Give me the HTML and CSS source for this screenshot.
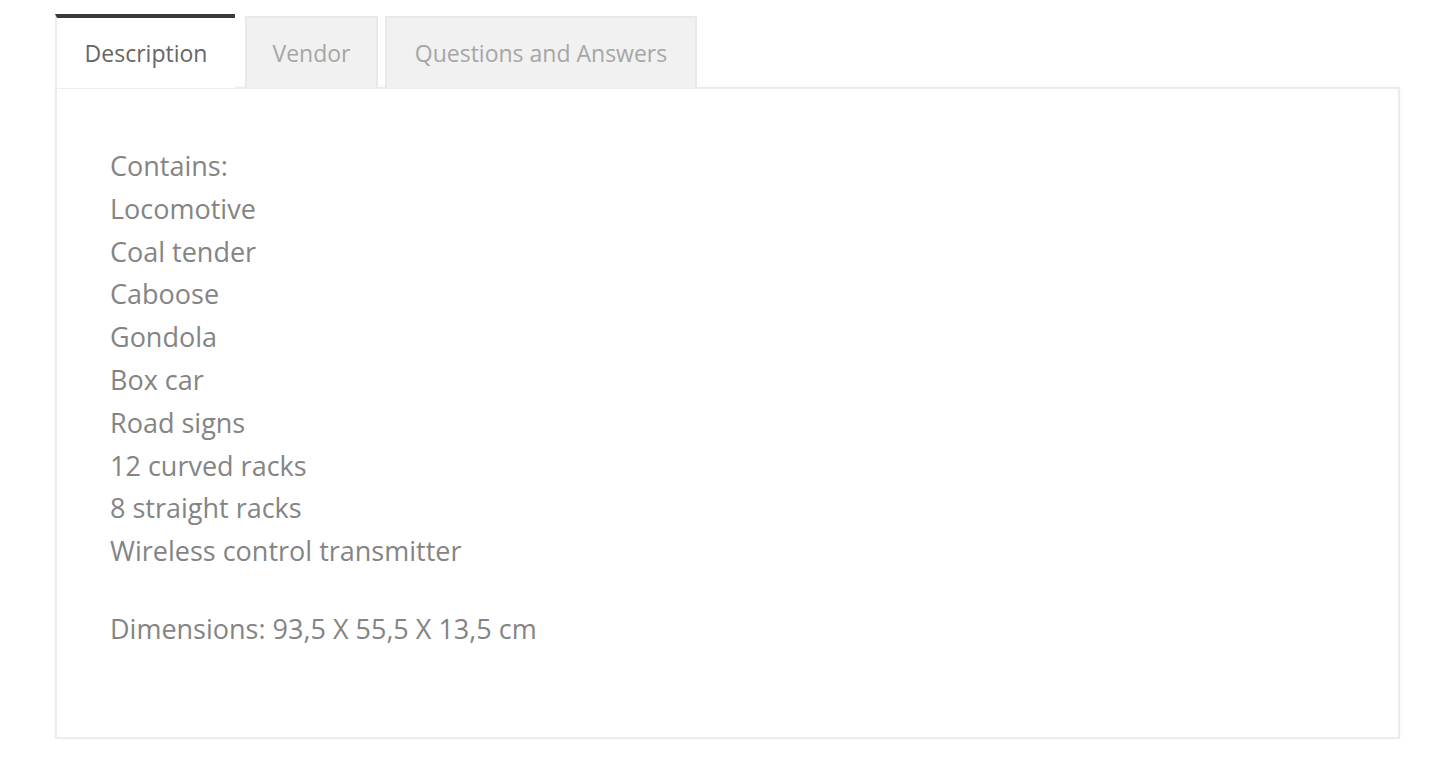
FILE: index.html
```html
<!DOCTYPE html>
<html lang="en">
<head>
<meta charset="utf-8">
<title>Product tabs</title>
<link rel="stylesheet" href="styles.css">
</head>
<body>
<div class="tabs-wrap">
  <ul class="tabs">
    <li class="tab tab-active">Description</li>
    <li class="tab tab-vendor">Vendor</li>
    <li class="tab tab-qa">Questions and Answers</li>
  </ul>
  <div class="panel">
    <div class="list">
      <p>Contains:</p>
      <p>Locomotive</p>
      <p>Coal tender</p>
      <p>Caboose</p>
      <p>Gondola</p>
      <p>Box car</p>
      <p>Road signs</p>
      <p>12 curved racks</p>
      <p>8 straight racks</p>
      <p>Wireless control transmitter</p>
    </div>
    <p class="dims">Dimensions: 93,5 X 55,5 X 13,5 cm</p>
  </div>
</div>
</body>
</html>
```
FILE: styles.css
```css
html, body {
  margin: 0;
  padding: 0;
  background: #ffffff;
}
body {
  font-family: "Open Sans", "Liberation Sans", sans-serif;
  color: #848484;
}
.tabs-wrap {
  padding: 14px 40px 0 55px;
}
.tabs {
  list-style: none;
  margin: 0;
  padding: 0;
  display: flex;
  align-items: flex-end;
  position: relative;
  z-index: 1;
}
.tab {
  height: 72px;
  box-sizing: border-box;
  display: flex;
  align-items: center;
  justify-content: center;
  font-size: 23px;
  color: #a6a6a6;
  background: #f1f1f1;
  border: 2px solid #e9e9e9;
  border-bottom: none;
}
.tab-active {
  width: 180px;
  height: 74px;
  background: #ffffff;
  color: #666666;
  border: none;
  border-top: 4px solid #3a3a3a;
  border-left: 2px solid #ececec;
}
.tab-vendor {
  width: 133px;
  margin-left: 10px;
}
.tab-qa {
  width: 312px;
  margin-left: 7px;
}
.panel {
  margin-top: -1px;
  height: 652px;
  box-sizing: border-box;
  border: 2px solid #ececec;
  box-shadow: 0 0 4px rgba(0, 0, 0, 0.05);
  padding: 56px 0 0 53px;
  background: #fff;
}
.list p, .dims {
  margin: 0;
  font-size: 27px;
  line-height: 42.8px;
}
.dims {
  margin-top: 35px;
}
```
